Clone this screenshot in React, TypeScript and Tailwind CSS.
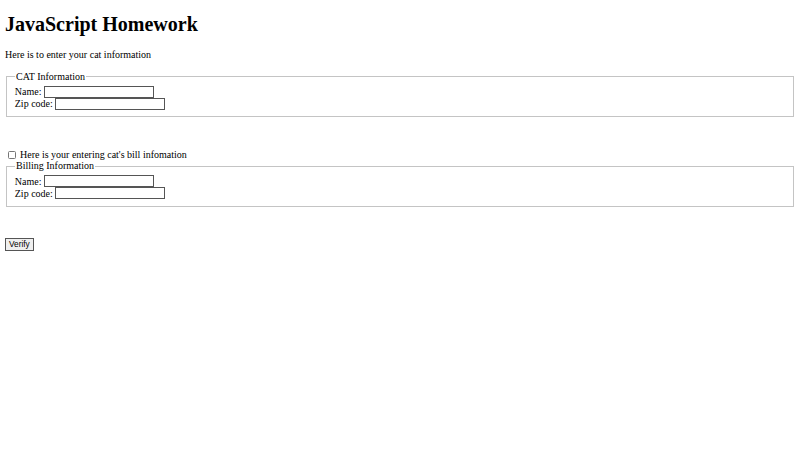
export default function App() {
  return (
    <div className="min-h-[450px] bg-white px-[5px] pt-[13px] text-black font-['Liberation_Serif',serif] text-[10px] leading-[11.5px]">
      <h1 className="text-[20px] leading-[23px] font-bold">JavaScript Homework</h1>
      <p className="mt-[13px]">Here is to enter your cat information</p>

      <fieldset className="mt-[10px] mx-[1.25px] px-[7.5px] pt-[3.5px] pb-[6.25px] border border-[#c4c4c4]">
        <legend className="px-[1.25px]">CAT Information</legend>
        <div className="flex items-center h-[12px]">
          Name:&nbsp;
          <input type="text" className="w-[110px] h-[12px] border border-[#555] bg-white" />
        </div>
        <div className="flex items-center h-[12px]">
          Zip code:&nbsp;
          <input type="text" className="w-[110px] h-[12px] border border-[#555] bg-white" />
        </div>
      </fieldset>

      <div className="mt-[32px] flex items-center h-[11.5px]">
        <input
          type="checkbox"
          className="appearance-none w-[8px] h-[8px] ml-[2.5px] mr-[2px] border border-[#767676] rounded-[1.5px] bg-white"
        />
        &nbsp;Here is your entering cat's bill infomation
      </div>

      <fieldset className="mx-[1.25px] px-[7.5px] pt-[3.5px] pb-[6.25px] border border-[#c4c4c4]">
        <legend className="px-[1.25px]">Billing Information</legend>
        <div className="flex items-center h-[12px]">
          Name:&nbsp;
          <input type="text" className="w-[110px] h-[12px] border border-[#555] bg-white" />
        </div>
        <div className="flex items-center h-[12px]">
          Zip code:&nbsp;
          <input type="text" className="w-[110px] h-[12px] border border-[#555] bg-white" />
        </div>
      </fieldset>

      <button
        type="button"
        className="mt-[31px] h-[13px] px-[3px] border border-[#555] bg-[#efefef] font-['Liberation_Sans',sans-serif] text-[8.3px] leading-[10px]"
      >
        Verify
      </button>
    </div>
  )
}
